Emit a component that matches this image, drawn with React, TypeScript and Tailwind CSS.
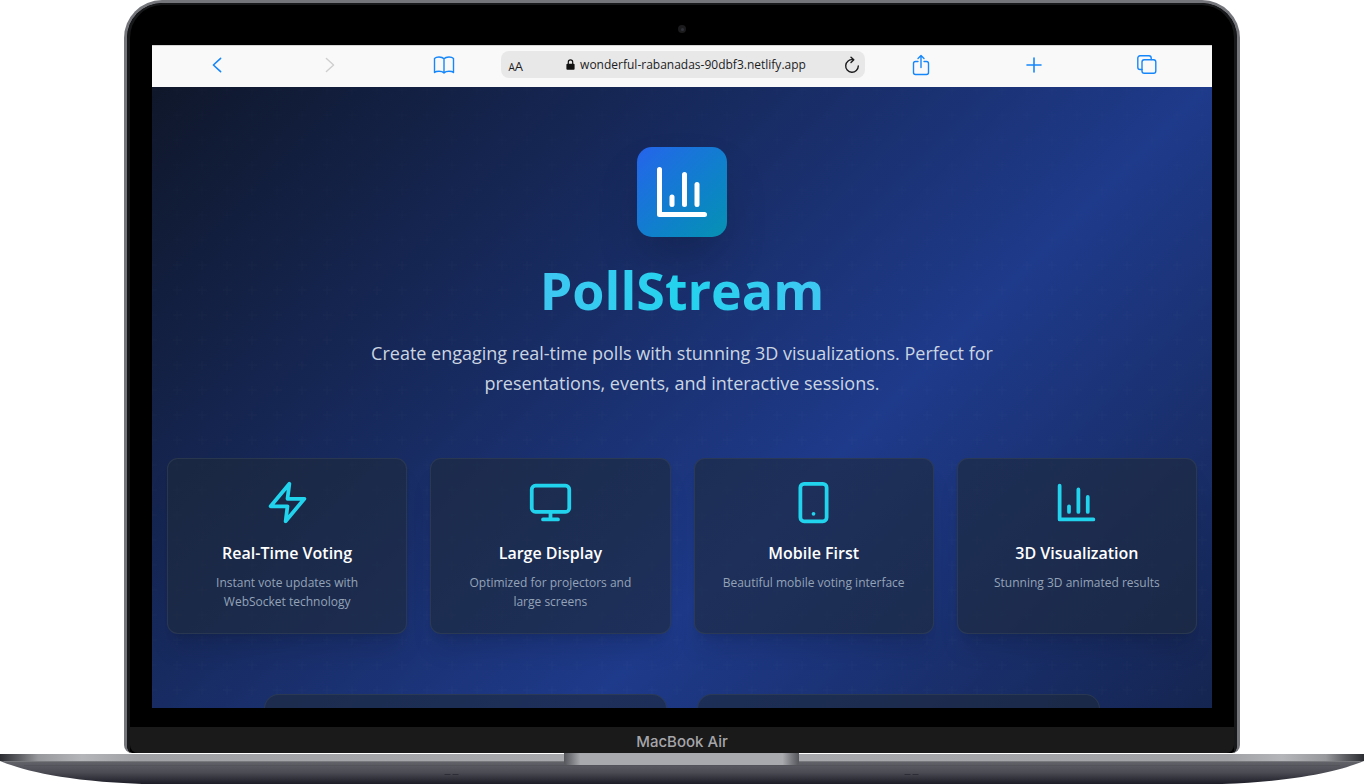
import React from "react";

type IconProps = { className?: string };

function Glyph({ className, children }: IconProps & { children: React.ReactNode }) {
  return (
    <svg
      className={className}
      viewBox="0 0 24 24"
      fill="none"
      stroke="currentColor"
      strokeWidth={2}
      strokeLinecap="round"
      strokeLinejoin="round"
      aria-hidden="true"
    >
      {children}
    </svg>
  );
}

const BarChartIcon = ({ className }: IconProps) => (
  <Glyph className={className}>
    <path d="M3 3v18h18" />
    <path d="M18 17V9" />
    <path d="M13 17V5" />
    <path d="M8 17v-3" />
  </Glyph>
);

const ZapIcon = ({ className }: IconProps) => (
  <Glyph className={className}>
    <polygon points="13 2 3 14 12 14 11 22 21 10 12 10 13 2" />
  </Glyph>
);

const MonitorIcon = ({ className }: IconProps) => (
  <Glyph className={className}>
    <rect x="2" y="3" width="20" height="14" rx="2" />
    <path d="M8 21h8M12 17v4" />
  </Glyph>
);

const PhoneIcon = ({ className }: IconProps) => (
  <Glyph className={className}>
    <rect x="5" y="2" width="14" height="20" rx="2" />
    <path d="M12 18h.01" />
  </Glyph>
);

const features = [
  { title: "Real-Time Voting", text: "Instant vote updates with WebSocket technology", Icon: ZapIcon },
  { title: "Large Display", text: "Optimized for projectors and large screens", Icon: MonitorIcon },
  { title: "Mobile First", text: "Beautiful mobile voting interface", Icon: PhoneIcon },
  { title: "3D Visualization", text: "Stunning 3D animated results", Icon: BarChartIcon },
];

function ToolButton({ label, className, children }: { label: string; className: string; children: React.ReactNode }) {
  return (
    <button type="button" aria-label={label} className={`flex size-[22px] items-center justify-center ${className}`}>
      <svg
        className="size-[22px]"
        viewBox="0 0 22 22"
        fill="none"
        stroke="currentColor"
        strokeWidth={1.4}
        strokeLinecap="round"
        strokeLinejoin="round"
        aria-hidden="true"
      >
        {children}
      </svg>
    </button>
  );
}

function Toolbar() {
  return (
    <div className="flex h-[42px] shrink-0 items-center border-t border-[#d4d4d4] bg-[#f9f9f9] pb-1">
      <div className="flex flex-1 justify-between pr-[46px] pl-[54px]">
        <ToolButton label="Back" className="text-[#1686fb]">
          <path d="M14.6 4.4 7.4 11l7.2 6.6" strokeWidth={1.6} />
        </ToolButton>
        <ToolButton label="Forward" className="text-[#cfcfcf]">
          <path d="M7.4 4.4 14.6 11l-7.2 6.6" />
        </ToolButton>
        <ToolButton label="Bookmarks" className="text-[#1686fb]">
          <path d="M11 4.800C9.600 3.200 7.600 3 6 3 4 3 2.400 3.500 1.500 4.400v14.200c1-.9 2.500-1.300 4.500-1.300 1.700 0 3.700.300 5 1.600 1.300-1.300 3.300-1.600 5-1.600 2 0 3.500.400 4.500 1.300V4.400C19.600 3.500 18 3 16 3c-1.600 0-3.600.200-5 1.800zM11 4.800v14.100" />
        </ToolButton>
      </div>
      <div className="flex h-[27px] w-[364px] items-center rounded-[8px] bg-[#e8e8e8] pr-[5px] pl-2 text-[#1c1c1e]">
        <button type="button" aria-label="Text size" className="flex w-5 items-baseline pt-1 leading-none">
          <span className="text-[10px]">A</span>
          <span className="text-[13px]">A</span>
        </button>
        <div className="flex flex-1 items-center justify-center gap-[5px]">
          <svg className="h-[11px] w-[9px]" viewBox="0 0 9 11" aria-hidden="true">
            <path d="M2.300 5V3.100a2.200 2.200 0 0 1 4.400 0V5" fill="none" stroke="#111" strokeWidth={1.200} />
            <rect x="0.400" y="4.700" width="8.200" height="6" rx="1" fill="#111" />
          </svg>
          <span className="text-[12px] leading-4 whitespace-nowrap">wonderful-rabanadas-90dbf3.netlify.app</span>
        </div>
        <button type="button" aria-label="Reload" className="flex w-4 justify-end">
          <svg
            className="h-[18px] w-4"
            viewBox="0 0 16 18"
            fill="none"
            stroke="currentColor"
            strokeWidth={1.400}
            strokeLinecap="round"
            strokeLinejoin="round"
            aria-hidden="true"
          >
            <path d="M8.900 3.700A6.300 6.300 0 1 0 14.300 10" />
            <path d="M7 1.200 9.800 3.800 7 6.600" />
          </svg>
        </button>
      </div>
      <div className="flex flex-1 justify-between pr-[54px] pl-[45px]">
        <ToolButton label="Share" className="text-[#1686fb]">
          <path d="M8 7.500H5.500A2 2 0 0 0 3.500 9.500v9a2 2 0 0 0 2 2h11a2 2 0 0 0 2-2v-9a2 2 0 0 0-2-2H14" />
          <path d="M11 13.500V1.800M8 4.500l3-3 3 3" />
        </ToolButton>
        <ToolButton label="New tab" className="text-[#1686fb]">
          <path d="M11 4v14M4 11h14" strokeWidth={1.600} />
        </ToolButton>
        <ToolButton label="Tabs" className="text-[#1686fb]">
          <path d="M6 15.500H4a2.200 2.200 0 0 1-2.200-2.200V4A2.200 2.200 0 0 1 4 1.800h9A2.200 2.200 0 0 1 15.200 4v1.500" />
          <rect x="6" y="5.800" width="13.800" height="13.400" rx="2.200" />
        </ToolButton>
      </div>
    </div>
  );
}

function Landing() {
  return (
    <div className="relative bg-linear-[135deg] from-[#0f172a] via-[#1e3a8a] to-[#0f172a] px-[15px] pt-[60px]">
      <svg className="absolute inset-0 size-full text-white opacity-[0.015]" aria-hidden="true">
        <defs>
          <pattern id="plus" width="25" height="25" x="13" y="16" patternUnits="userSpaceOnUse">
            <path d="M12 8v9M8 12h9" stroke="currentColor" />
          </pattern>
        </defs>
        <rect width="100%" height="100%" fill="url(#plus)" />
      </svg>
      <div className="relative">
        <header className="flex flex-col items-center text-center">
          <div className="rounded-[15px] bg-linear-to-br from-[#2563eb] to-[#0891b2] p-[15px] shadow-2xl">
            <BarChartIcon className="size-[60px] text-white" />
          </div>
          <h1 className="mt-[23px] w-full bg-linear-to-r from-[#60a5fa] via-[#22d3ee] to-[#60a5fa] bg-clip-text text-[52px] leading-[60px] font-bold text-transparent">
            PollStream
          </h1>
          <p className="mt-[18px] max-w-[640px] text-[18px] leading-[30px] text-[#cbd5e1]">
            Create engaging real-time polls with stunning 3D visualizations. Perfect for presentations, events, and
            interactive sessions.
          </p>
        </header>
        <section className="mt-[60px] grid grid-cols-4 gap-[23px]">
          {features.map(({ title, text, Icon }) => (
            <article
              key={title}
              className="flex flex-col items-center rounded-[11px] border border-[#334155]/60 bg-[#1e293b]/60 px-[26px] pt-[21px] pb-[22px] text-center shadow-xl"
            >
              <Icon className="size-[45px] text-[#22d3ee]" />
              <h2 className="mt-[15px] text-[16px] leading-[26px] font-semibold text-white">{title}</h2>
              <p className="mt-[7px] text-[12px] leading-[19px] text-[#94a3b8]">{text}</p>
            </article>
          ))}
        </section>
        <section className="mx-auto mt-[60px] grid max-w-[836px] grid-cols-2 gap-[30px] pb-[60px]">
          <div className="h-96 rounded-[15px] border border-[#334155]/60 bg-[#1e293b]/60" />
          <div className="h-96 rounded-[15px] border border-[#334155]/60 bg-[#1e293b]/60" />
        </section>
      </div>
    </div>
  );
}

function LaptopBase() {
  return (
    <svg className="block h-[31px] w-full shrink-0" viewBox="0 0 1364 31" preserveAspectRatio="none" aria-hidden="true">
      <defs>
        <linearGradient id="body" x1="0" y1="0" x2="0" y2="1">
          <stop offset="0" stopColor="#64656b" />
          <stop offset="0.5" stopColor="#4a4b53" />
          <stop offset="1" stopColor="#1b1c25" />
        </linearGradient>
        <linearGradient id="strip">
          <stop offset="0" stopColor="#2c2d33" />
          <stop offset="0.014" stopColor="#5d5e63" />
          <stop offset="0.028" stopColor="#97989c" />
          <stop offset="0.06" stopColor="#b4b5b9" />
          <stop offset="0.1" stopColor="#a0a1a5" />
          <stop offset="0.5" stopColor="#a9aaae" />
          <stop offset="0.9" stopColor="#a0a1a5" />
          <stop offset="0.94" stopColor="#b4b5b9" />
          <stop offset="0.972" stopColor="#97989c" />
          <stop offset="0.986" stopColor="#5d5e63" />
          <stop offset="1" stopColor="#2c2d33" />
        </linearGradient>
        <linearGradient id="notch">
          <stop offset="0" stopColor="#55565c" />
          <stop offset="0.03" stopColor="#77787d" />
          <stop offset="0.07" stopColor="#a9aaae" />
          <stop offset="0.93" stopColor="#a9aaae" />
          <stop offset="0.97" stopColor="#77787d" />
          <stop offset="1" stopColor="#55565c" />
        </linearGradient>
      </defs>
      <path d="M0 8C22 17 62 28 142 31H1222C1302 28 1342 17 1364 8z" fill="url(#body)" />
      <path d="M0 1H1364V8H0z" fill="url(#strip)" />
      <path d="M4 8.500H1360" stroke="#77787c" />
      <path d="M24 12.500H1340" stroke="#4b4c53" strokeOpacity={0.500} />
      <path d="M564 0H799V9Q799 12 796 12H567Q564 12 564 9z" fill="url(#notch)" />
      <path
        d="M445 21.500h5M453 21.500h5M905 21.500h5M913 21.500h5"
        stroke="#2c2d36"
        strokeWidth={1.200}
        strokeLinecap="round"
      />
    </svg>
  );
}

export default function App() {
  return (
    <main className="flex h-screen flex-col overflow-hidden bg-white font-['Open_Sans','Noto_Sans',sans-serif]">
      <div className="mx-31 flex min-h-0 flex-1 flex-col overflow-hidden rounded-t-[38px] rounded-b-[8px] border-x-3 border-t-3 border-[#74757b] bg-black">
        <div className="flex min-h-0 flex-1 flex-col overflow-hidden rounded-t-[35px] border-x-3 border-t-2 border-[#17181a]">
          <div className="flex h-10 shrink-0 items-center justify-center pt-4 pb-2">
            <span className="flex size-2 items-center justify-center rounded-full bg-[#1b1b1e]">
              <span className="size-[3px] rounded-full bg-[#2f3038]" />
            </span>
          </div>
          <div className="mx-[22px] flex min-h-0 flex-1 flex-col overflow-hidden">
            <Toolbar />
            <div className="min-h-0 flex-1 overflow-hidden">
              <Landing />
            </div>
          </div>
          <div className="h-[19px] shrink-0" />
          <div className="flex h-[26px] shrink-0 items-center justify-center rounded-b-[8px] bg-[#1a1a1a] pt-[2px] font-['Inter',sans-serif] text-[15px] leading-none font-medium text-[#a6a6aa]">
            MacBook Air
          </div>
        </div>
      </div>
      <LaptopBase />
    </main>
  );
}
